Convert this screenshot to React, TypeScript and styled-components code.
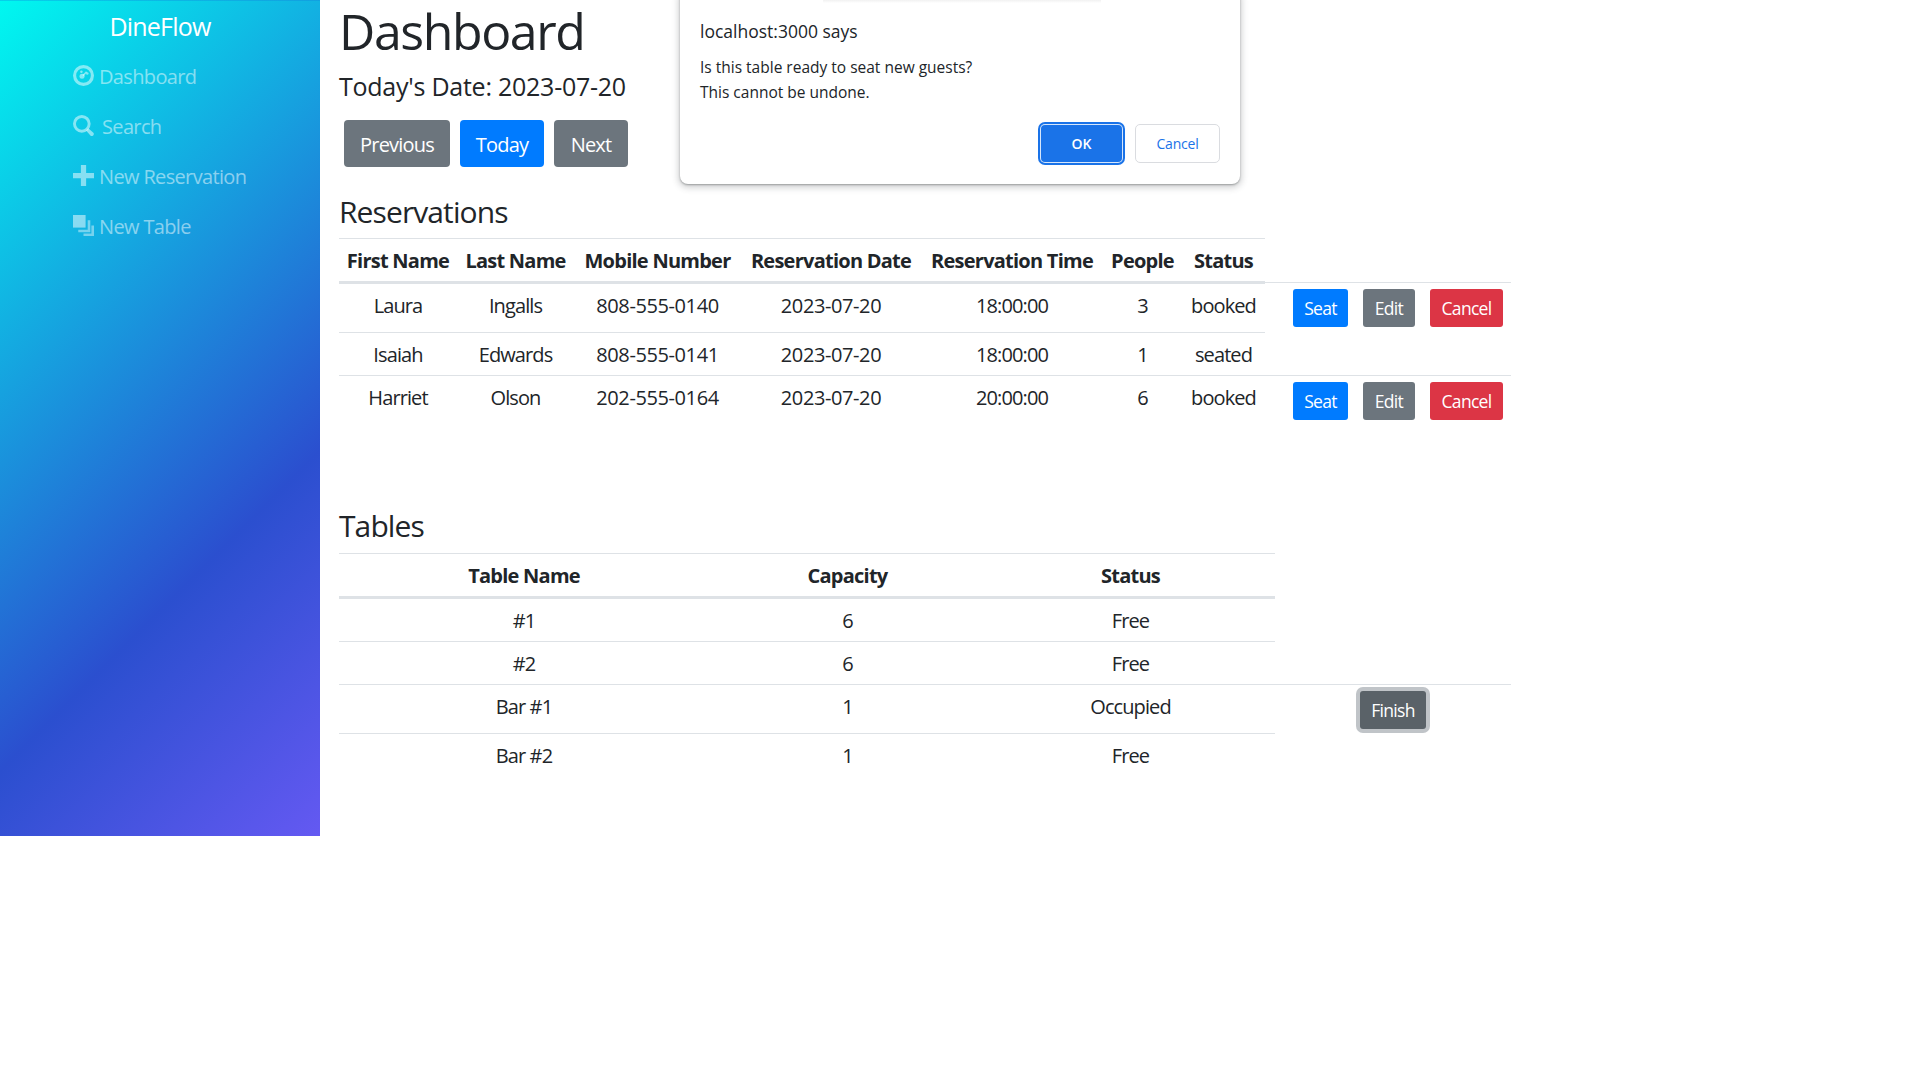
import React, { FunctionComponent } from "react";
import styled, { createGlobalStyle } from "styled-components";

const GlobalStyle = createGlobalStyle`
  html, body {
    margin: 0;
    padding: 0;
    background: #fff;
  }
  body {
    font-family: "Open Sans", "Noto Sans", sans-serif;
    font-size: 20px;
    line-height: 30px;
    color: #212529;
  }
  * {
    box-sizing: border-box;
  }
`;

const Page = styled.div`
  position: relative;
  display: flex;
  align-items: flex-start;
  width: 1920px;
  height: 1080px;
  overflow: hidden;
`;

const Sidebar = styled.nav`
  flex: 0 0 320px;
  height: 836px;
  background: linear-gradient(135deg, #00f8f0 0%, #2b4fcf 66.7%, #6459f2 100%);
  box-shadow: inset 0 1px 0 rgba(20, 120, 220, 0.3);
`;

const Brand = styled.div`
  height: 51px;
  padding-top: 7px;
  font-size: 25px;
  line-height: 38px;
  letter-spacing: -0.8px;
  color: #fff;
  text-align: center;
`;

const NavItem = styled.a<{ $gap?: number }>`
  display: flex;
  align-items: center;
  height: 50px;
  padding: 2px 0 0 73px;
  gap: ${(p) => p.$gap ?? 5}px;
  letter-spacing: -0.65px;
  color: rgba(255, 255, 255, 0.5);
`;

const NavIcon = styled.svg`
  flex: none;
  width: 21px;
  height: 21px;
  margin-top: -4px;
  fill: rgba(255, 255, 255, 0.5);
`;

const Main = styled.main`
  flex: 1;
  padding-left: 19px;
`;

const Title = styled.h1`
  margin: 1px 0 7px;
  font-size: 50px;
  line-height: 60px;
  font-weight: 500;
  letter-spacing: -1.4px;
`;

const DateLine = styled.h4`
  margin: 0 0 16px;
  font-size: 25px;
  line-height: 36px;
  font-weight: 500;
  letter-spacing: -0.25px;
`;

const DateButtons = styled.div`
  display: flex;
  gap: 10px;
  height: 47px;
  margin: 0 0 27px 5px;
`;

const colors = { gray: "#6c757d", blue: "#007bff", red: "#dc3545" };

const DateButton = styled.button<{ $color: "gray" | "blue"; $w: number }>`
  width: ${(p) => p.$w}px;
  padding: 2px 0 0;
  border: 0;
  border-radius: 4px;
  background: ${(p) => colors[p.$color]};
  color: #fff;
  font: inherit;
  letter-spacing: -0.8px;
`;

const SectionTitle = styled.h4<{ $mb: number }>`
  margin: 0 0 ${(p) => p.$mb}px;
  font-size: 30px;
  line-height: 36px;
  font-weight: 500;
  letter-spacing: -0.9px;
`;

const Table = styled.table<{ $width: number; $mb?: number }>`
  table-layout: fixed;
  width: ${(p) => p.$width}px;
  margin-bottom: ${(p) => p.$mb ?? 0}px;
  border-collapse: collapse;
  text-align: center;
`;

const Th = styled.th`
  padding: 7px 0 5px;
  border-top: 1px solid #dee2e6;
  border-bottom: 3px solid #dee2e6;
  font-weight: 700;
  letter-spacing: -0.75px;
  white-space: nowrap;
`;

const Td = styled.td<{ $numeric?: boolean }>`
  padding: 7px 0 5px;
  border-top: 1px solid #dee2e6;
  vertical-align: top;
  letter-spacing: ${(p) => (p.$numeric ? "-0.4px" : "-0.9px")};
  white-space: nowrap;
`;

const ActionCell = styled(Td)`
  padding: 6px 0 5px 28px;
  text-align: left;
`;

const ActionRow = styled.div<{ $center?: boolean }>`
  display: flex;
  gap: 15px;
  justify-content: ${(p) => (p.$center ? "center" : "flex-start")};
`;

const SmallButton = styled.button<{ $color: "gray" | "blue" | "red"; $w: number }>`
  width: ${(p) => p.$w}px;
  height: 38px;
  padding: 0;
  border: 0;
  border-radius: 3px;
  background: ${(p) => colors[p.$color]};
  color: #fff;
  font: inherit;
  font-size: 17.5px;
  letter-spacing: -0.7px;
`;

const FinishButton = styled(SmallButton)`
  background: #5a6268;
  box-shadow: 0 0 0 4px rgba(130, 138, 145, 0.5);
`;

const FinishCell = styled(Td)`
  padding: 6px 0 5px;
`;

const Dialog = styled.div`
  position: absolute;
  left: 680px;
  top: -10px;
  width: 560px;
  height: 194px;
  padding: 29px 20px 0;
  border-radius: 8px;
  background: #fff;
  box-shadow: 0 1px 2px rgba(60, 64, 67, 0.4), 0 2px 6px 2px rgba(60, 64, 67, 0.22);
`;

const DialogStrip = styled.div`
  position: absolute;
  left: 143px;
  top: 10px;
  width: 278px;
  height: 3px;
  background: linear-gradient(#f1f1f1, #fff);
`;

const DialogTitle = styled.div`
  font-size: 17.5px;
  line-height: 24px;
  margin-bottom: 12px;
`;

const DialogText = styled.div`
  font-size: 15.5px;
  line-height: 24.5px;
`;

const DialogActions = styled.div`
  position: absolute;
  right: 20px;
  bottom: 21px;
  display: flex;
  gap: 12px;
  align-items: center;
`;

const OkButton = styled.button`
  width: 83px;
  height: 39px;
  border: 0;
  border-radius: 5px;
  background: #1a73e8;
  color: #fff;
  font: 600 14px "Open Sans", sans-serif;
  box-shadow: inset 0 0 0 1px #d6e6fb, 0 0 0 2px #1a73e8;
`;

const CancelButton = styled.button`
  width: 85px;
  height: 39px;
  border: 1px solid #dadce0;
  border-radius: 5px;
  background: #fff;
  color: #1a73e8;
  font: 400 14px "Open Sans", sans-serif;
  letter-spacing: -0.2px;
`;

const reservations = [
  { first: "Laura", last: "Ingalls", mobile: "808-555-0140", time: "18:00:00", people: 3, status: "booked" },
  { first: "Isaiah", last: "Edwards", mobile: "808-555-0141", time: "18:00:00", people: 1, status: "seated" },
  { first: "Harriet", last: "Olson", mobile: "202-555-0164", time: "20:00:00", people: 6, status: "booked" },
];

const tables = [
  { name: "#1", capacity: 6, status: "Free" },
  { name: "#2", capacity: 6, status: "Free" },
  { name: "Bar #1", capacity: 1, status: "Occupied" },
  { name: "Bar #2", capacity: 1, status: "Free" },
];

const App: FunctionComponent = () => {
  return (
    <Page>
      <GlobalStyle />
      <Sidebar>
        <Brand>DineFlow</Brand>
        <NavItem>
          <NavIcon viewBox="0 0 20 20">
            <path
              fillRule="evenodd"
              d="M10 0a10 10 0 1 0 0 20 10 10 0 0 0 0-20zm0 3a7 7 0 1 1 0 14 7 7 0 0 1 0-14z"
            />
            <circle cx="8.6" cy="10.8" r="2.4" />
            <circle cx="8" cy="6.4" r="1.2" />
            <circle cx="13.6" cy="8.2" r="1.2" />
            <path d="M9 9.6l3.4-3.6 1 1-3.2 3.8z" />
          </NavIcon>
          Dashboard
        </NavItem>
        <NavItem $gap={8}>
          <NavIcon viewBox="0 0 20 20">
            <path
              fillRule="evenodd"
              d="M8.4 0a8.4 8.4 0 1 0 0 16.8A8.4 8.4 0 0 0 8.4 0zm0 2.8a5.6 5.6 0 1 1 0 11.2 5.6 5.6 0 0 1 0-11.2z"
            />
            <path d="M14.6 12.6l4.8 4.4a1.9 1.9 0 0 1-2.6 2.7l-4.4-4.9z" />
          </NavIcon>
          Search
        </NavItem>
        <NavItem>
          <NavIcon viewBox="0 0 20 20">
            <path d="M7.5 0h5v7.5H20v5h-7.5V20h-5v-7.5H0v-5h7.5z" />
          </NavIcon>
          New Reservation
        </NavItem>
        <NavItem>
          <NavIcon viewBox="0 0 20 20">
            <path d="M0 0h12v12H0z" />
            <path d="M14 5h2.5v11.5H5V14h9z" opacity="0.85" />
            <path d="M17.5 10H20v10H10v-2.5h7.5z" opacity="0.85" />
          </NavIcon>
          New Table
        </NavItem>
      </Sidebar>
      <Main>
        <Title>Dashboard</Title>
        <DateLine>Today's Date: 2023-07-20</DateLine>
        <DateButtons>
          <DateButton $color="gray" $w={106}>Previous</DateButton>
          <DateButton $color="blue" $w={84}>Today</DateButton>
          <DateButton $color="gray" $w={74}>Next</DateButton>
        </DateButtons>
        <SectionTitle $mb={8}>Reservations</SectionTitle>
        <Table $width={1172} $mb={83}>
          <colgroup>
            <col width={118} />
            <col width={117} />
            <col width={167} />
            <col width={180} />
            <col width={182} />
            <col width={79} />
            <col width={83} />
            <col width={246} />
          </colgroup>
          <thead>
            <tr>
              <Th>First Name</Th>
              <Th>Last Name</Th>
              <Th>Mobile Number</Th>
              <Th>Reservation Date</Th>
              <Th>Reservation Time</Th>
              <Th>People</Th>
              <Th>Status</Th>
            </tr>
          </thead>
          <tbody>
            {reservations.map((r) => (
              <tr key={r.first}>
                <Td>{r.first}</Td>
                <Td>{r.last}</Td>
                <Td $numeric>{r.mobile}</Td>
                <Td $numeric>2023-07-20</Td>
                <Td>{r.time}</Td>
                <Td>{r.people}</Td>
                <Td>{r.status}</Td>
                {r.status === "booked" && (
                  <ActionCell>
                    <ActionRow>
                      <SmallButton $color="blue" $w={55}>Seat</SmallButton>
                      <SmallButton $color="gray" $w={52}>Edit</SmallButton>
                      <SmallButton $color="red" $w={73}>Cancel</SmallButton>
                    </ActionRow>
                  </ActionCell>
                )}
              </tr>
            ))}
          </tbody>
        </Table>
        <SectionTitle $mb={9}>Tables</SectionTitle>
        <Table $width={1172}>
          <colgroup>
            <col width={370} />
            <col width={277} />
            <col width={289} />
            <col width={236} />
          </colgroup>
          <thead>
            <tr>
              <Th>Table Name</Th>
              <Th>Capacity</Th>
              <Th>Status</Th>
            </tr>
          </thead>
          <tbody>
            {tables.map((t) => (
              <tr key={t.name}>
                <Td>{t.name}</Td>
                <Td>{t.capacity}</Td>
                <Td>{t.status}</Td>
                {t.status === "Occupied" && (
                  <FinishCell>
                    <ActionRow $center>
                      <FinishButton $color="gray" $w={66}>Finish</FinishButton>
                    </ActionRow>
                  </FinishCell>
                )}
              </tr>
            ))}
          </tbody>
        </Table>
      </Main>
      <Dialog>
        <DialogStrip />
        <DialogTitle>localhost:3000 says</DialogTitle>
        <DialogText>Is this table ready to seat new guests?</DialogText>
        <DialogText>This cannot be undone.</DialogText>
        <DialogActions>
          <OkButton>OK</OkButton>
          <CancelButton>Cancel</CancelButton>
        </DialogActions>
      </Dialog>
    </Page>
  );
};

export default App;
